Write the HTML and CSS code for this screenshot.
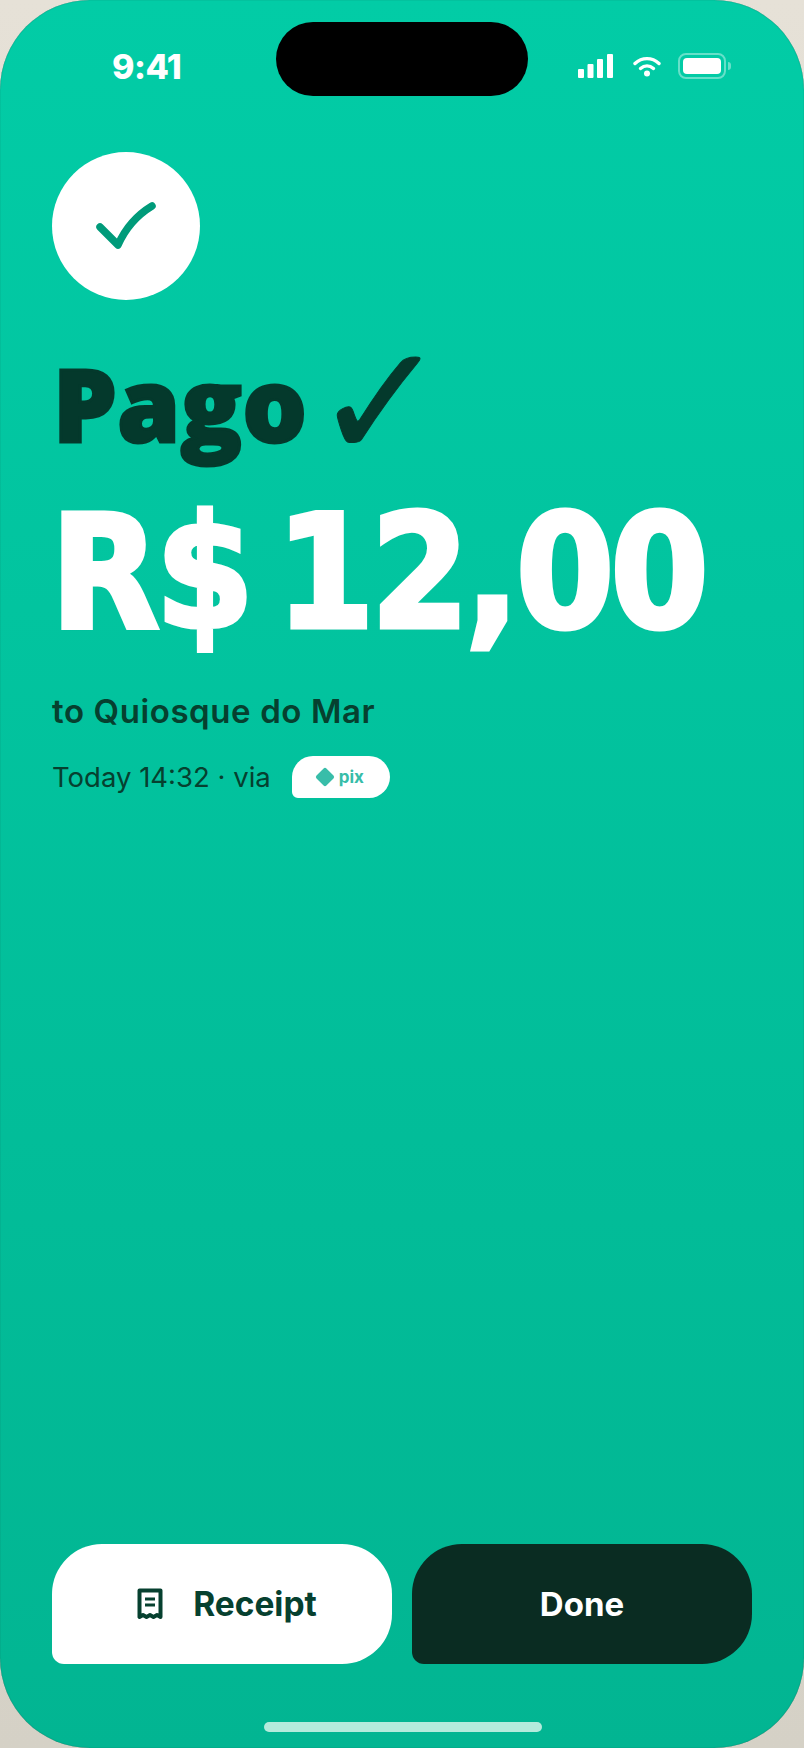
FILE: index.html
```html
<!DOCTYPE html>
<html lang="en">
<head>
    <meta charset="UTF-8">
    <meta name="viewport" content="width=device-width, initial-scale=1.0">
    <title>Pago</title>
    <link rel="stylesheet" href="styles.css">
</head>
<body>
    <div class="phone">
        <div class="island"></div>
        <div class="status">
            <span class="time">9:41</span>
            <div class="status-icons">
                <svg class="signal" width="35" height="24" viewBox="0 0 35 24">
                    <rect x="0" y="15" width="6" height="9" rx="1"/>
                    <rect x="9.500" y="10" width="6" height="14" rx="1"/>
                    <rect x="19" y="5" width="6" height="19" rx="1"/>
                    <rect x="29" y="0" width="6" height="24" rx="1"/>
                </svg>
                <svg class="wifi" width="28" height="22" viewBox="0 0 28 22">
                    <path d="M2 8.500C9 2 19 2 26 8.500" fill="none" stroke="#fff" stroke-width="3.400" stroke-linecap="round"/>
                    <path d="M7.500 13.500C11.500 10 16.500 10 20.500 13.500" fill="none" stroke="#fff" stroke-width="3.400" stroke-linecap="round"/>
                    <circle cx="14" cy="18.500" r="3" fill="#fff"/>
                </svg>
                <div class="battery">
                    <div class="battery-body"><div class="battery-fill"></div></div>
                    <div class="battery-nub"></div>
                </div>
            </div>
        </div>

        <main class="content">
            <div class="check-circle">
                <svg width="148" height="148" viewBox="0 0 148 148">
                    <path d="M48 75L66 93Q77 68 100 54" fill="none" stroke="#009b7a" stroke-width="7.500" stroke-linecap="round" stroke-linejoin="round"/>
                </svg>
            </div>
            <h1 class="title"><span>Pago</span><span class="title-check">✓</span></h1>
            <div class="amount">R$ 12,00</div>
            <p class="payee">to Quiosque do Mar</p>
            <div class="meta">
                <span>Today 14:32 · via</span>
                <span class="pix"><i class="pix-mark"></i>pix</span>
            </div>
        </main>

        <div class="actions">
            <button class="btn btn-light">
                <svg width="26" height="32" viewBox="0 0 26 32">
                    <path d="M2.500 2.500H23.500V29L20 27L16.500 29L13 27L9.500 29L6 27L2.500 29Z" fill="none" stroke="#06402f" stroke-width="4" stroke-linejoin="round"/>
                    <path d="M8 11H18M8 17H18" stroke="#06402f" stroke-width="3"/>
                </svg>
                Receipt
            </button>
            <button class="btn btn-dark">Done</button>
        </div>
        <div class="home-bar"></div>
    </div>
</body>
</html>
```

FILE: styles.css
```css
* {
    box-sizing: border-box;
}
body {
    margin: 0;
    width: 804px;
    height: 1748px;
    background: linear-gradient(180deg, #e6e1d7, #d5d1c6);
    font-family: Inter, "Liberation Sans", sans-serif;
    overflow: hidden;
}
.phone {
    position: relative;
    display: flex;
    flex-direction: column;
    width: 804px;
    height: 1748px;
    border-radius: 90px;
    overflow: hidden;
    background: linear-gradient(180deg, #02cca6, #02b592);
    box-shadow: inset 0 0 1px rgba(40, 40, 40, 0.6);
}
.island {
    position: absolute;
    top: 22px;
    left: 276px;
    width: 252px;
    height: 74px;
    border-radius: 37px;
    background: #000;
}
.status {
    display: flex;
    justify-content: space-between;
    align-items: center;
    height: 52px;
    margin-top: 40px;
    padding: 0 73px 0 112px;
    color: #fff;
}
.time {
    font-size: 34px;
    font-weight: 800;
    letter-spacing: -0.5px;
}
.status-icons {
    display: flex;
    align-items: center;
    gap: 20px;
}
.wifi {
    margin-right: -3px;
}
.signal {
    fill: #fff;
}
.battery {
    display: flex;
    align-items: center;
    gap: 2px;
}
.battery-body {
    width: 48px;
    height: 26px;
    padding: 3px;
    border: 2px solid rgba(255, 255, 255, 0.4);
    border-radius: 8px;
}
.battery-fill {
    height: 100%;
    background: #fff;
    border-radius: 4px;
}
.battery-nub {
    width: 3px;
    height: 8px;
    background: rgba(255, 255, 255, 0.4);
    border-radius: 0 3px 3px 0;
}
.content {
    display: flex;
    flex-direction: column;
    flex: 1;
    padding: 60px 52px 0;
}
.check-circle {
    width: 148px;
    height: 148px;
    border-radius: 50%;
    background: #fff;
}
.title {
    display: flex;
    align-items: baseline;
    gap: 6px;
    height: 130px;
    margin: 38px 0 0 1px;
    font-family: "Open Sans", sans-serif;
    font-size: 101px;
    font-weight: 800;
    line-height: 130px;
    letter-spacing: 0.5px;
    color: #04392c;
    -webkit-text-stroke: 3px #04392c;
    white-space: nowrap;
}
.title-check {
    font-family: "DejaVu Sans", sans-serif;
    font-size: 160px;
    font-weight: 400;
    line-height: 0;
    letter-spacing: 0;
    transform: translateY(16px);
    -webkit-text-stroke: 1px #04392c;
}
.amount {
    margin: 10px 0 0 -1px;
    font-family: "DejaVu Sans Condensed", "DejaVu Sans", sans-serif;
    font-size: 156px;
    font-weight: 700;
    line-height: 190px;
    letter-spacing: -3px;
    word-spacing: -20px;
    color: #fff;
    -webkit-text-stroke: 5px #fff;
    text-shadow: 0 2px 1px rgba(0, 110, 85, 0.45);
    white-space: nowrap;
}
.payee {
    margin: 23px 0 0;
    font-size: 33px;
    font-weight: 600;
    line-height: 40px;
    letter-spacing: 0.6px;
    color: #06402f;
}
.meta {
    display: flex;
    align-items: center;
    gap: 21px;
    margin-top: 25px;
    font-size: 27.500px;
    color: #06402f;
}
.pix {
    display: flex;
    align-items: center;
    gap: 7px;
    width: 98px;
    height: 42px;
    padding-left: 26px;
    border-radius: 21px 21px 21px 6px;
    background: #fff;
    font-size: 17px;
    font-weight: 700;
    color: #38bda9;
}
.pix-mark {
    width: 14px;
    height: 14px;
    border-radius: 2px;
    background: #38bda9;
    transform: rotate(45deg);
}
.actions {
    display: grid;
    grid-template-columns: 340px 340px;
    gap: 20px;
    padding: 0 52px;
}
.btn {
    display: flex;
    justify-content: center;
    align-items: center;
    gap: 30px;
    height: 120px;
    border: 0;
    border-radius: 50px 50px 50px 12px;
    font-family: Inter, sans-serif;
    font-size: 33px;
    font-weight: 700;
}
.btn-light {
    padding-left: 16px;
    font-size: 33.500px;
    background: #fff;
    color: #06402f;
}
.btn-dark {
    background: #0a2c22;
    color: #fff;
}
.home-bar {
    width: 278px;
    height: 10px;
    margin: 58px 0 16px 264px;
    border-radius: 5px;
    background: #b4ebdc;
}
```
